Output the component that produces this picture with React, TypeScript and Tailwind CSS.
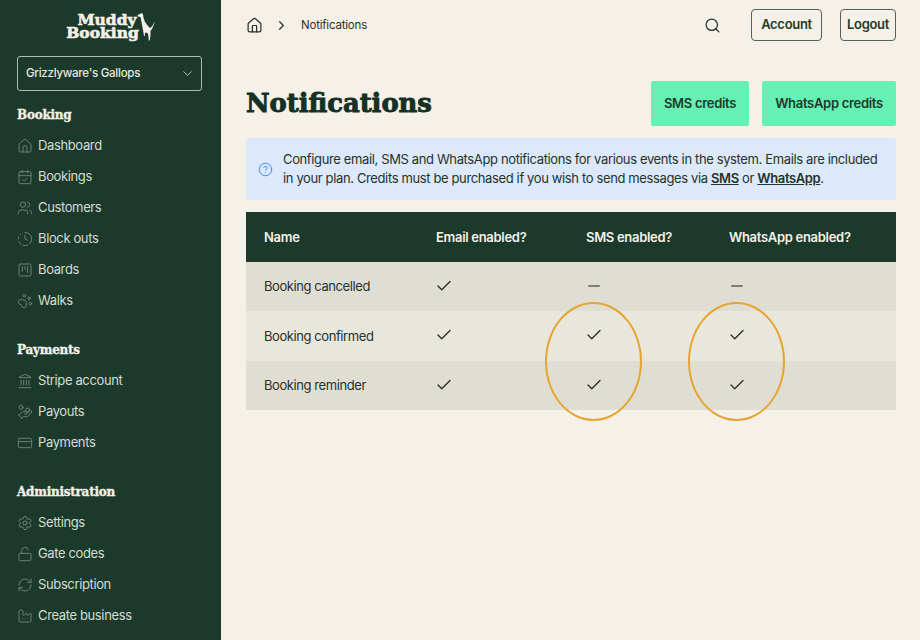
import {
  CalendarCheck,
  Check,
  ChevronDown,
  ChevronRight,
  ClockFading,
  CircleHelp,
  CreditCard,
  Factory,
  HandCoins,
  House,
  Landmark,
  LockOpen,
  Minus,
  PawPrint,
  RefreshCw,
  Search,
  Settings,
  SquareKanban,
  Users,
} from "lucide-react";

const SLAB = "font-['DejaVu_Serif',serif]";

const NAV = [
  {
    title: "Booking",
    items: [
      { label: "Dashboard", icon: House },
      { label: "Bookings", icon: CalendarCheck },
      { label: "Customers", icon: Users },
      { label: "Block outs", icon: ClockFading },
      { label: "Boards", icon: SquareKanban },
      { label: "Walks", icon: PawPrint },
    ],
  },
  {
    title: "Payments",
    items: [
      { label: "Stripe account", icon: Landmark },
      { label: "Payouts", icon: HandCoins },
      { label: "Payments", icon: CreditCard },
    ],
  },
  {
    title: "Administration",
    items: [
      { label: "Settings", icon: Settings },
      { label: "Gate codes", icon: LockOpen },
      { label: "Subscription", icon: RefreshCw },
      { label: "Create business", icon: Factory },
    ],
  },
];

const ROWS = [
  { name: "Booking cancelled", sms: false, whatsapp: false, bg: "bg-[#e0ded3]" },
  { name: "Booking confirmed", sms: true, whatsapp: true, bg: "bg-[#e9e6dc]" },
  { name: "Booking reminder", sms: true, whatsapp: true, bg: "bg-[#e0ded3]" },
];

function Logo() {
  return (
    <div className="flex h-[56px] items-start justify-center pt-[13px] pl-[2px]">
      <div
        className={`${SLAB} text-center text-[15.5px] leading-[13px] font-bold tracking-[0px] text-[#f5f0e8] [-webkit-text-stroke:0.6px_#f5f0e8]`}
      >
        <div className="pl-[9px]">Muddy</div>
        <div>Booking</div>
      </div>
      {/* dog */}
      <svg viewBox="0 0 18 28" className="-ml-[2px] h-[28px] w-[18px]" fill="#f5f0e8">
        <path d="M0.500 2L3 1l1-1 2 1 .5 4L8 9l3 4 2 2 2-1.500 2.500-4.500.2.300L15.500 15l-2 3v4l-.7 5.500h-1l-.6-6.500-1.700-1.500-1.500.5-.2 3h-.8L6 17 4.500 9l-1-5L1 3.500z" />
      </svg>
    </div>
  );
}

function Sidebar() {
  return (
    <aside className="flex w-[221px] shrink-0 flex-col bg-[#1c3a2c] pr-[19px] pl-[17px]">
      <Logo />
      <button className="flex h-[35px] items-center justify-between rounded-[3px] border border-[#a9bfb2] pr-[6px] pl-[8px] text-[11.5px] font-medium tracking-[-0.25px] text-[#e6e9df]">
        Grizzlyware's Gallops
        <ChevronDown size={15} strokeWidth={1.5} className="text-[#b5c4ba]" />
      </button>
      <div className="mt-[15px] flex flex-col gap-[25px]">
        {NAV.map((group) => (
          <div key={group.title}>
            <h2
              className={`${SLAB} h-[18px] text-[12px] leading-[18px] font-bold tracking-[-0.25px] text-[#f5f0e8] [-webkit-text-stroke:0.35px_#f5f0e8]`}
            >
              {group.title}
            </h2>
            <ul className="mt-[6px]">
              {group.items.map(({ label, icon: Icon }) => (
                <li
                  key={label}
                  className="flex h-[31px] items-center gap-[5px] text-[13px] tracking-[-0.37px] text-[#d5dcd2]"
                >
                  <Icon size={16} strokeWidth={1.35} className="text-[#6f8a7b]" />
                  {label}
                </li>
              ))}
            </ul>
          </div>
        ))}
      </div>
    </aside>
  );
}

function Yes() {
  return <Check size={18} strokeWidth={1.8} className="-mt-[1px] -ml-[1px] text-[#26322b]" />;
}

function No() {
  return <Minus size={18} strokeWidth={1.8} className="-mt-[1px] -ml-[1px] text-[#55625b]" />;
}

function Oval({ className }: { className: string }) {
  return (
    <div
      className={`absolute top-[302px] h-[119px] w-[97px] rounded-[50%] border-[2.5px] border-[#e5a52f] ${className}`}
    />
  );
}

export default function App() {
  return (
    <div className="relative flex h-screen w-full overflow-hidden bg-[#f5f0e8] font-['Inter',sans-serif] tracking-[-0.3px] text-[#1c3a2c]">
      <Sidebar />
      <main className="flex-1 pr-[24px] pl-[25px]">
        <header className="flex h-[50px] items-center">
          <House size={17} strokeWidth={1.75} className="text-[#26322b]" />
          <ChevronRight size={15} strokeWidth={1.9} className="ml-[11px] text-[#26322b]" />
          <span className="ml-[12px] pt-[1px] text-[11.5px] tracking-[-0.2px] text-[#26322b]">Notifications</span>
          <Search size={17} strokeWidth={1.75} className="mr-[30px] ml-auto text-[#26322b]" />
          <button className="mr-[18px] h-[32px] w-[71px] rounded-[4px] border border-[#55625b] text-[13px] font-semibold">
            Account
          </button>
          <button className="h-[32px] w-[56px] rounded-[4px] border border-[#55625b] text-[13px] font-semibold">
            Logout
          </button>
        </header>
        <div className="mt-[31px] flex items-center justify-between">
          <h1
            className={`${SLAB} text-[25.8px] font-bold tracking-[0px] text-[#153024] [-webkit-text-stroke:0.9px_#153024]`}
          >
            Notifications
          </h1>
          <div className="flex gap-[13px]">
            <button className="h-[45px] w-[98px] rounded-[2px] bg-[#66f0b4] text-[13px] font-semibold">
              SMS credits
            </button>
            <button className="h-[45px] w-[134px] rounded-[2px] bg-[#66f0b4] text-[13px] font-semibold">
              WhatsApp credits
            </button>
          </div>
        </div>
        <div className="mt-[12px] flex h-[62px] items-center gap-[10px] rounded-[3px] bg-[#dbe9fb] px-[12px] text-[13px] leading-[19px] tracking-[-0.37px] text-[#26322b]">
          <CircleHelp size={15} strokeWidth={1.5} className="shrink-0 text-[#3b82f6]" />
          <p>
            Configure email, SMS and WhatsApp notifications for various events in the system. Emails are included
            in your plan. Credits must be purchased if you wish to send messages via{" "}
            <a className="font-semibold underline">SMS</a> or <a className="font-semibold underline">WhatsApp</a>.
          </p>
        </div>
        <table className="mt-[12px] w-full table-fixed text-left text-[13px]">
          <colgroup>
            <col className="w-[172px]" />
            <col className="w-[150px]" />
            <col className="w-[143px]" />
            <col />
          </colgroup>
          <thead className="bg-[#1c3a2c] text-[#f5f0e8]">
            <tr className="h-[50px]">
              <th className="pt-[1px] pl-[18px] font-semibold">Name</th>
              <th className="pt-[1px] pl-[18px] font-semibold">Email enabled?</th>
              <th className="pt-[1px] pl-[18px] font-semibold">SMS enabled?</th>
              <th className="pt-[1px] pl-[18px] font-semibold">WhatsApp enabled?</th>
            </tr>
          </thead>
          <tbody className="tracking-[-0.42px] text-[#26322b]">
            {ROWS.map((row) => (
              <tr key={row.name} className={`h-[49.3px] ${row.bg}`}>
                <td className="pt-[1px] pl-[18px]">{row.name}</td>
                <td className="pl-[18px]">
                  <Yes />
                </td>
                <td className="pl-[18px]">{row.sms ? <Yes /> : <No />}</td>
                <td className="pl-[18px]">{row.whatsapp ? <Yes /> : <No />}</td>
              </tr>
            ))}
          </tbody>
        </table>
      </main>
      <Oval className="left-[545px]" />
      <Oval className="left-[688px]" />
    </div>
  );
}
